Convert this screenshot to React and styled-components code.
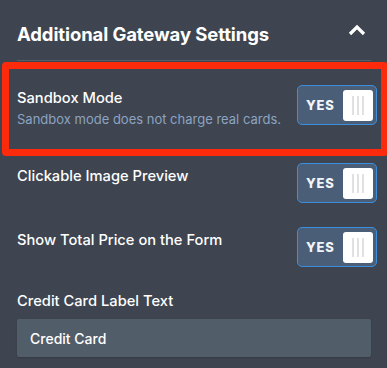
import React from "react";
import styled, { createGlobalStyle } from "styled-components";

const GlobalStyle = createGlobalStyle`
  body {
    margin: 0;
    background: #3e4550;
    font-family: Inter, "Liberation Sans", Arial, sans-serif;
    color: #ffffff;
  }
`;

const settings = [
  {
    id: "sandbox",
    label: "Sandbox Mode",
    hint: "Sandbox mode does not charge real cards.",
    highlight: true,
  },
  { id: "preview", label: "Clickable Image Preview" },
  { id: "total", label: "Show Total Price on the Form" },
];

function Toggle() {
  return (
    <ToggleBox>
      <ToggleText>YES</ToggleText>
      <Knob>
        <Grip />
        <Grip />
        <Grip />
      </Knob>
    </ToggleBox>
  );
}

function SettingRow({ label, hint }) {
  return (
    <Row>
      <TextBlock>
        <Label>{label}</Label>
        {hint && <Hint>{hint}</Hint>}
      </TextBlock>
      <Toggle />
    </Row>
  );
}

export default function App() {
  return (
    <Panel>
      <GlobalStyle />
      <Header>
        <Title>Additional Gateway Settings</Title>
        <svg width="18" height="12" viewBox="0 0 18 12">
          <polyline
            points="2,10 9,3 16,10"
            fill="none"
            stroke="#ffffff"
            strokeWidth="3.2"
          />
        </svg>
      </Header>
      <List>
        {settings.map((s) =>
          s.highlight ? (
            <Highlight key={s.id}>
              <SettingRow label={s.label} hint={s.hint} />
            </Highlight>
          ) : (
            <Plain key={s.id}>
              <SettingRow label={s.label} />
            </Plain>
          )
        )}
      </List>
      <Field>
        <Label>Credit Card Label Text</Label>
        <Input defaultValue="Credit Card" />
      </Field>
    </Panel>
  );
}

const Panel = styled.div`
  width: 387px;
  height: 368px;
  overflow: hidden;
`;

const Header = styled.div`
  display: flex;
  justify-content: space-between;
  align-items: center;
  height: 60px;
  margin: 0 16px 0 17px;
  padding-right: 5px;
  border-bottom: 1px solid #56606c;
`;

const Title = styled.h2`
  margin: 0;
  font-size: 18.5px;
  font-weight: 700;
  line-height: 22px;
  padding-top: 8px;
  letter-spacing: -0.1px;
`;

const List = styled.div`
  display: flex;
  flex-direction: column;
`;

const Highlight = styled.div`
  margin: 1px -1px 0 2px;
  border: 7px solid #fe2a0c;
  border-radius: 4px;
  padding: 16px 4px 21px 8px;
`;

const Plain = styled.div`
  padding: 0 10px 0 17px;
  margin-top: 7px;

  & + & {
    margin-top: 24px;
  }
`;

const Row = styled.div`
  display: flex;
  justify-content: space-between;
  align-items: flex-start;
`;

const TextBlock = styled.div`
  display: flex;
  flex-direction: column;
  gap: 2px;
  padding-top: 3px;
`;

const Label = styled.div`
  font-size: 14.7px;
  font-weight: 500;
  line-height: 20px;
  color: #ffffff;
`;

const Hint = styled.div`
  font-size: 13px;
  line-height: 18px;
  color: #8da3c1;
`;

const ToggleBox = styled.div`
  box-sizing: border-box;
  width: 80px;
  height: 40px;
  display: flex;
  align-items: center;
  justify-content: space-between;
  padding: 3px 3px 3px 8px;
  background: #4a5e78;
  border: 1px solid #3c8fdc;
  border-radius: 5px;
`;

const ToggleText = styled.span`
  font-size: 13px;
  font-weight: 800;
  letter-spacing: 0.8px;
  color: #f2f4f7;
`;

const Knob = styled.div`
  width: 30px;
  height: 31px;
  background: #ffffff;
  border-radius: 3px;
  display: flex;
  justify-content: center;
  align-items: center;
  gap: 3.5px;
`;

const Grip = styled.div`
  width: 1.5px;
  height: 19px;
  background: #e1e1e1;
`;

const Field = styled.div`
  margin: 24px 16px 0 17px;
  display: flex;
  flex-direction: column;
  gap: 8px;
`;

const Input = styled.input`
  box-sizing: border-box;
  height: 38px;
  width: 100%;
  padding: 0 13px;
  border: none;
  border-radius: 2px;
  background: #525d6a;
  color: #ffffff;
  font-family: Inter, "Liberation Sans", Arial, sans-serif;
  font-size: 14px;
  font-weight: 500;
  outline: none;
  box-shadow: 0 1px 2px rgba(0, 0, 0, 0.15);
`;
